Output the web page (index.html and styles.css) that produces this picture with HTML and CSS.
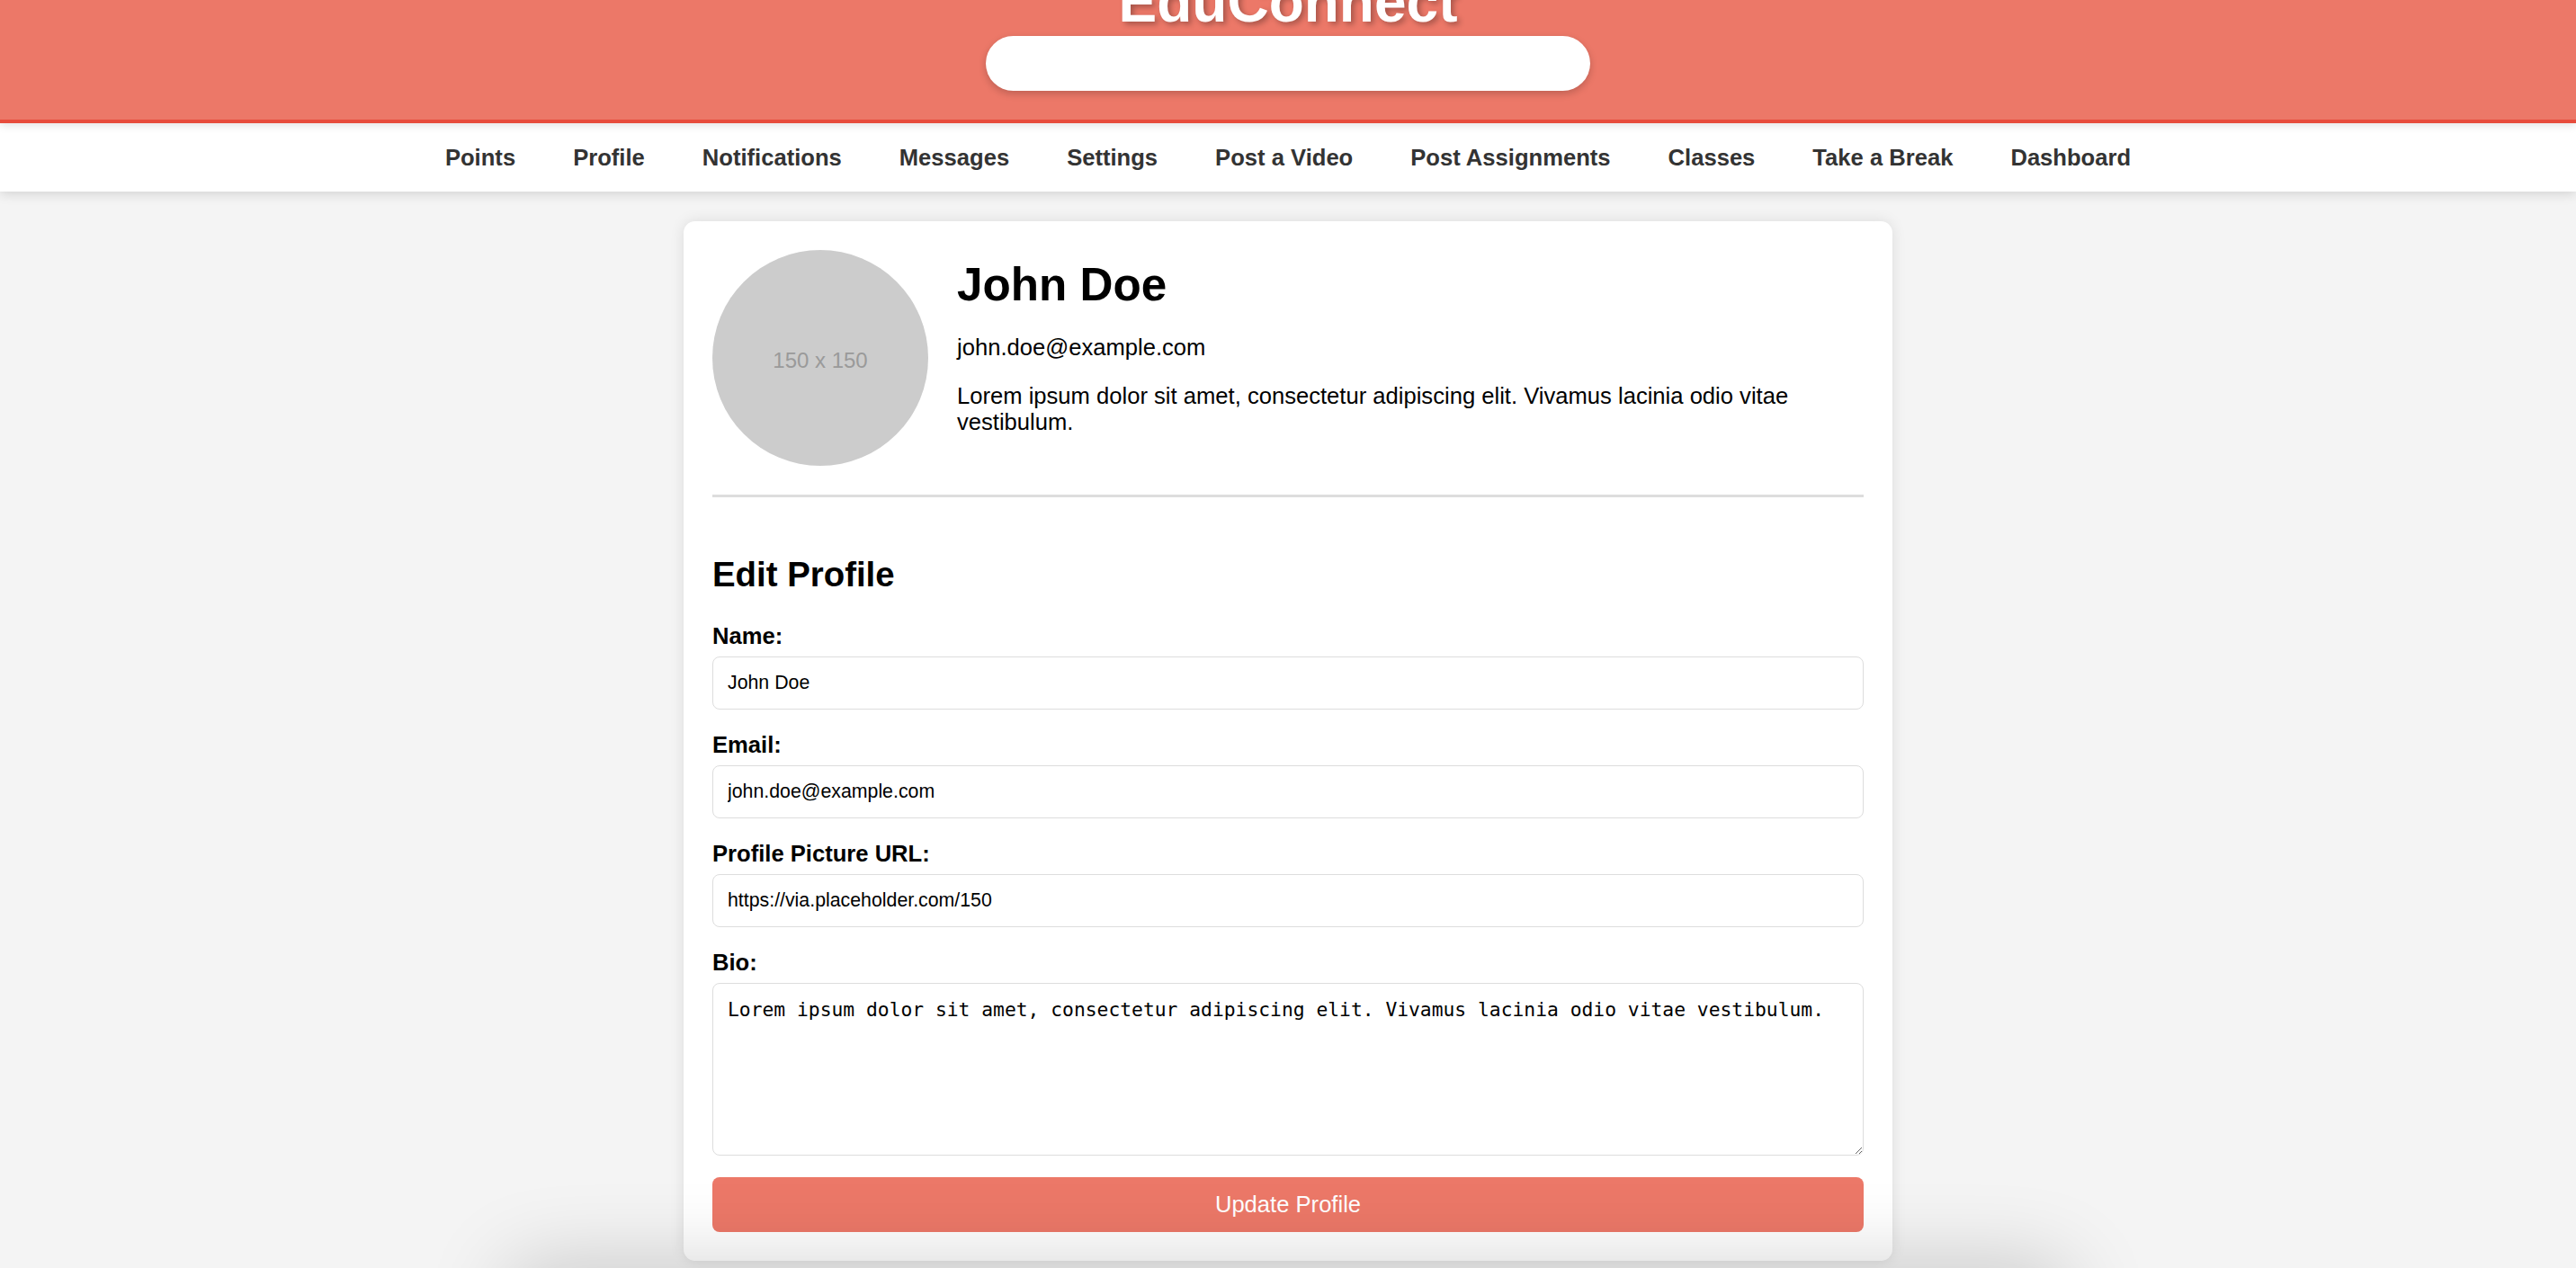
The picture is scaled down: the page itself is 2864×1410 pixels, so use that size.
FILE: index.html
```html
<!DOCTYPE html>
<html lang="en">
<head>
<meta charset="utf-8">
<title>EduConnect - Profile</title>
<link rel="stylesheet" href="styles.css">
</head>
<body>
<header class="site-header">
  <h1 class="site-title">EduConnect</h1>
  <input class="search" type="text" aria-label="Search">
</header>
<nav class="main-nav">
  <a href="#">Points</a>
  <a href="#">Profile</a>
  <a href="#">Notifications</a>
  <a href="#">Messages</a>
  <a href="#">Settings</a>
  <a href="#">Post a Video</a>
  <a href="#">Post Assignments</a>
  <a href="#">Classes</a>
  <a href="#">Take a Break</a>
  <a href="#">Dashboard</a>
</nav>
<main class="card">
  <section class="profile-header">
    <div class="avatar">150 x 150</div>
    <div class="profile-info">
      <h1 class="profile-name">John Doe</h1>
      <p class="profile-email">john.doe@example.com</p>
      <p class="profile-bio">Lorem ipsum dolor sit amet, consectetur adipiscing elit. Vivamus lacinia odio vitae vestibulum.</p>
    </div>
  </section>
  <section class="edit-profile">
    <h2 class="edit-title">Edit Profile</h2>
    <form class="edit-form">
      <label for="name">Name:</label>
      <input id="name" class="field" type="text" value="John Doe">
      <label for="email">Email:</label>
      <input id="email" class="field" type="email" value="john.doe@example.com">
      <label for="pic">Profile Picture URL:</label>
      <input id="pic" class="field" type="text" value="https://via.placeholder.com/150">
      <label for="bio">Bio:</label>
      <textarea id="bio" class="bio-field">Lorem ipsum dolor sit amet, consectetur adipiscing elit. Vivamus lacinia odio vitae vestibulum.</textarea>
      <button type="button" class="submit">Update Profile</button>
    </form>
  </section>
</main>
<footer class="page-footer"></footer>
</body>
</html>
```
FILE: styles.css
```css
html {
  zoom: 1.6;
}

body {
  margin: 0;
  background: #f4f4f4;
  font-family: "Liberation Sans", Arial, Helvetica, sans-serif;
  color: #000;
}

.site-header {
  position: relative;
  z-index: 2;
  background: #ec7868;
  color: #fff;
  text-align: center;
  padding: 0 0 20px;
  border-bottom: 2.5px solid #e74c3c;
  box-shadow: 0 2px 6px rgba(0, 0, 0, 0.12);
}

.site-title {
  font-size: 40px;
  line-height: 46px;
  margin: -21px 0 0;
  font-weight: bold;
  text-shadow: 2px 2px 4px rgba(0, 0, 0, 0.3);
}

.search {
  display: block;
  box-sizing: border-box;
  width: 420px;
  height: 38px;
  margin: 0 auto;
  border: none;
  border-radius: 20px;
  background: #fff;
  box-shadow: 0 2px 5px rgba(0, 0, 0, 0.2);
  outline: none;
}

.main-nav {
  display: flex;
  justify-content: center;
  background: #fff;
  box-shadow: 0 2px 8px rgba(0, 0, 0, 0.15);
}

.main-nav a {
  display: block;
  padding: 15px 20px 14px;
  font-size: 16px;
  line-height: 18.5px;
  font-weight: bold;
  color: #333;
  text-decoration: none;
}

.card {
  display: block;
  width: 800px;
  margin: 21px auto 20px;
  padding: 20px;
  background: #fff;
  border-radius: 8px;
  box-shadow: 0 0 10px rgba(0, 0, 0, 0.1);
}

.profile-header {
  display: flex;
  align-items: center;
  gap: 20px;
  padding-bottom: 20px;
  border-bottom: 2px solid #ddd;
  margin-bottom: 40px;
}

.avatar {
  flex: 0 0 150px;
  box-sizing: border-box;
  width: 150px;
  height: 150px;
  padding-top: 3px;
  border-radius: 50%;
  background: #ccc;
  color: #9a9a9a;
  font-size: 15px;
  display: flex;
  align-items: center;
  justify-content: center;
}

.profile-info {
  flex: 1;
}

.profile-name {
  font-size: 32px;
  margin: 0 0 10px;
}

.profile-email,
.profile-bio {
  font-size: 16px;
  margin: 16px 0;
}

.edit-title {
  font-size: 24px;
  margin: 0 0 20px;
}

.edit-form label {
  display: block;
  font-size: 16px;
  font-weight: bold;
  margin-bottom: 5px;
}

.field {
  display: block;
  box-sizing: border-box;
  width: 100%;
  height: 36.5px;
  padding: 0 10px;
  margin: 0 0 16px;
  border: 1px solid #ddd;
  border-radius: 5px;
  font-family: "Liberation Sans", Arial, sans-serif;
  font-size: 13.33px;
  color: #000;
  background: #fff;
}

.bio-field {
  display: block;
  box-sizing: border-box;
  width: 100%;
  height: 120px;
  padding: 10px;
  margin: 0 0 15px;
  border: 1px solid #ddd;
  border-radius: 5px;
  font-family: "DejaVu Sans Mono", monospace;
  font-size: 13.33px;
  color: #000;
  background: #fff;
}

.submit {
  display: block;
  width: 100%;
  padding: 10px;
  border: none;
  border-radius: 5px;
  background: #ec7868;
  color: #fff;
  font-family: "Liberation Sans", Arial, sans-serif;
  font-size: 16px;
  line-height: 18px;
}

.page-footer {
  position: fixed;
  top: 100%;
  left: 0;
  right: 0;
  margin: 0 auto;
  width: 1080px;
  height: 60px;
  background: #f4f4f4;
  box-shadow: 0 0 60px rgba(0, 0, 0, 0.2);
}
```
